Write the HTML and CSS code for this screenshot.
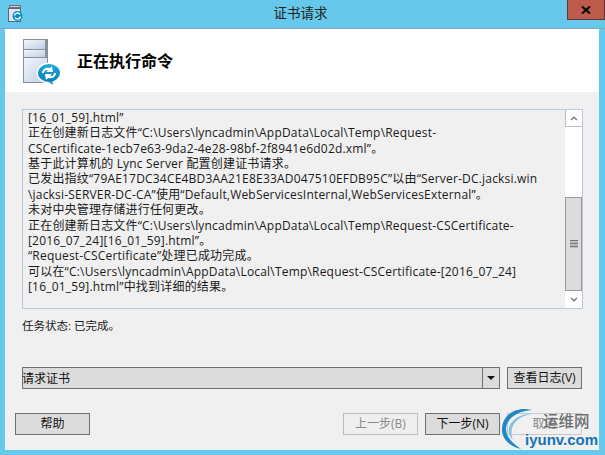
FILE: index.html
```html
<!DOCTYPE html>
<html lang="zh-CN">
<head>
<meta charset="utf-8">
<title>证书请求</title>
<link rel="stylesheet" href="styles.css">
</head>
<body>
<div class="window">
  <div class="titlebar">
    <svg class="title-icon" width="16" height="18" viewBox="0 0 16 18">
      <rect x="1.500" y="0.500" width="11" height="2" fill="#c9ccd2" stroke="#6d7278"/>
      <rect x="0.500" y="3.500" width="12" height="13" fill="#dfe6f2" stroke="#5f6570"/>
      <circle cx="9.500" cy="11" r="5" fill="#0d8fc4"/>
      <path d="M6.500 10.500a3 3 0 0 1 5.500-1M12.500 11.500a3 3 0 0 1-5.500 1" fill="none" stroke="#fff" stroke-width="1.400"/>
    </svg>
    <span class="title-text">证书请求</span>
    <div class="close">
      <svg width="10" height="8" viewBox="0 0 10 8"><path d="M1 0.500 9 7.500M9 0.500 1 7.500" stroke="#0a0a0a" stroke-width="2.200"/></svg>
    </div>
  </div>
  <div class="client">
    <header class="header">
      <svg class="server-icon" width="42" height="48" viewBox="0 0 42 48">
        <defs>
          <linearGradient id="srv" x1="0" y1="0" x2="1" y2="1">
            <stop offset="0" stop-color="#f4f6fb"/>
            <stop offset="1" stop-color="#bdcfe6"/>
          </linearGradient>
          <linearGradient id="blue" x1="0" y1="0" x2="0" y2="1">
            <stop offset="0" stop-color="#19a9dc"/>
            <stop offset="1" stop-color="#0a7fb6"/>
          </linearGradient>
        </defs>
        <rect x="1" y="1" width="25" height="44" fill="#8a8f98"/>
        <rect x="2" y="2" width="21" height="9" fill="url(#srv)"/>
        <rect x="2" y="12" width="21" height="7" fill="url(#srv)"/>
        <rect x="2" y="20" width="23" height="24" fill="url(#srv)"/>
        <ellipse cx="27" cy="35" rx="12.500" ry="10.500" fill="#fff"/>
        <ellipse cx="27" cy="35" rx="11" ry="9" fill="url(#blue)"/>
        <path d="M20 35c0-4 4-6 8-5l2-2 1 6-7 0 2-2c-2-.5-4 .5-4 3zM34 35c0 4-4 6-8 5l-2 2-1-6 7 0-2 2c2 .5 4-.5 4-3z" fill="#fff"/>
        <path d="M27 44l4 3-1-4z" fill="#0a7fb6"/>
      </svg>
      <h1 class="heading">正在执行命令</h1>
    </header>
    <main class="body">
      <div class="logbox">
        <div class="logtext">
          <div>[16_01_59].html”</div>
          <div>正在创建新日志文件“C:\Users\lyncadmin\AppData\Local\Temp\Request-</div>
          <div>CSCertificate-1ecb7e63-9da2-4e28-98bf-2f8941e6d02d.xml”。</div>
          <div>基于此计算机的 Lync Server 配置创建证书请求。</div>
          <div>已发出指纹“79AE17DC34CE4BD3AA21E8E33AD047510EFDB95C”以由“Server-DC.jacksi.win</div>
          <div>\jacksi-SERVER-DC-CA”使用“Default,WebServicesInternal,WebServicesExternal”。</div>
          <div>未对中央管理存储进行任何更改。</div>
          <div>正在创建新日志文件“C:\Users\lyncadmin\AppData\Local\Temp\Request-CSCertificate-</div>
          <div>[2016_07_24][16_01_59].html”。</div>
          <div>“Request-CSCertificate”处理已成功完成。</div>
          <div>可以在“C:\Users\lyncadmin\AppData\Local\Temp\Request-CSCertificate-[2016_07_24]</div>
          <div>[16_01_59].html”中找到详细的结果。</div>
        </div>
        <div class="scrollbar">
          <div class="sb-btn"><svg width="8" height="5" viewBox="0 0 8 5"><path d="M1 4 4 1.200 7 4" fill="none" stroke="#777" stroke-width="1.300"/></svg></div>
          <div class="sb-track"></div>
          <div class="sb-thumb"><span class="grip"></span></div>
          <div class="sb-btn"><svg width="8" height="5" viewBox="0 0 8 5"><path d="M1 1 4 3.800 7 1" fill="none" stroke="#777" stroke-width="1.300"/></svg></div>
        </div>
      </div>
      <p class="status">任务状态: 已完成。</p>
      <div class="action-row">
        <div class="combo">
          <span class="combo-value">请求证书</span>
          <span class="combo-arrow"></span>
        </div>
        <button class="btn">查看日志(V)</button>
      </div>
      <div class="footer">
        <button class="btn">帮助</button>
        <div class="nav">
          <button class="btn disabled">上一步(B)</button>
          <button class="btn">下一步(N)</button>
          <button class="btn cancel">取消</button>
        </div>
      </div>
    </main>
  </div>
  <div class="watermark">
    <svg class="wm-ring" width="36" height="42" viewBox="0 0 36 42">
      <path d="M31 2C16 -2 2 6 1 20c-.500 11 7 18 19 21C11 35 5 29 5 20 6 10 17 3 31 2z" fill="#2088c4"/>
      <path d="M31 6C21 5 10 11 8 20c-1 5 1 9 4 12-2-4-2-8-1-12 2-7 10-13 20-14z" fill="#7fc0e4"/>
    </svg>
    <span class="wm-cn">运维网</span>
    <span class="wm-en">iyunv.com</span>
  </div>
</div>
</body>
</html>
```
FILE: styles.css
```css
* { box-sizing: border-box; }
html, body { margin: 0; padding: 0; }
body {
  width: 605px;
  height: 455px;
  overflow: hidden;
  font-family: "Open Sans", "Noto Sans CJK SC", sans-serif;
  font-size: 12px;
  color: #1a1a1a;
}
.window {
  position: relative;
  width: 605px;
  height: 455px;
  background: #66c8ea;
  display: flex;
  flex-direction: column;
}
.titlebar {
  position: relative;
  height: 29px;
  flex: none;
  display: flex;
  align-items: center;
  justify-content: center;
  border-bottom: 1px solid #7fa9c4;
}
.title-icon { position: absolute; left: 8px; top: 5px; }
.title-text {
  font-family: "Noto Sans CJK SC", sans-serif;
  font-size: 13.500px;
  color: #222;
  margin: -4px 4px 0 0;
}
.close {
  position: absolute;
  right: 0;
  top: 0;
  width: 38px;
  height: 20px;
  background: #bf5b4d;
  border: 1px solid #5a3a38;
  border-top: 0;
  display: flex;
  align-items: center;
  justify-content: center;
}
.client {
  flex: 1;
  margin: 0 6px 5px 5px;
  background: #f0f0f0;
  display: flex;
  flex-direction: column;
}
.header {
  height: 63px;
  flex: none;
  background: #fff;
  display: flex;
  align-items: center;
  padding-left: 17px;
}
.server-icon { flex: none; margin-top: 3px; }
.heading {
  margin: 0 0 0 13px;
  font-family: "Noto Sans CJK SC", sans-serif;
  font-size: 16px;
  font-weight: 700;
  color: #000;
  position: relative;
  top: -1px;
}
.body {
  flex: 1;
  padding: 17px 17px 0 17px;
  display: flex;
  flex-direction: column;
}
.logbox {
  height: 200px;
  flex: none;
  border: 1px solid #b3cbe2;
  display: flex;
  margin-right: -1px;
}
.logtext {
  flex: 1;
  padding: 0 0 0 5px;
  white-space: nowrap;
  overflow: hidden;
  font-size: 12px;
  letter-spacing: 0.190px;
}
.logtext div {
  height: 15.360px;
  line-height: 15.360px;
}
.scrollbar {
  width: 17px;
  flex: none;
  display: flex;
  flex-direction: column;
  background: #fff;
}
.sb-btn {
  height: 17px;
  flex: none;
  background: #fff;
  border: 1px solid #bdbdbd;
  border-width: 0 0 1px 1px;
  display: flex;
  align-items: center;
  justify-content: center;
}
.sb-btn:last-child { border-width: 0; }
.sb-track { flex: 1; }
.sb-thumb {
  height: 94px;
  flex: none;
  background: #dcdcdc;
  border: 1px solid #9a9a9a;
  display: flex;
  align-items: center;
  justify-content: center;
}
.grip {
  width: 8px;
  height: 8px;
  background: repeating-linear-gradient(#777 0 1px, #bbb 1px 3px);
}
.status {
  margin: 8px 0 0 0;
  height: 18px;
  line-height: 18px;
  font-size: 11.500px;
}
.action-row {
  margin-top: 32px;
  display: flex;
  gap: 7px;
}
.combo {
  width: 478px;
  height: 22px;
  background: #dcdcdc;
  border: 1px solid #707070;
  display: flex;
  align-items: center;
  justify-content: space-between;
  line-height: 18px;
}
.combo-value { color: #111; margin-left: -1px; position: relative; top: 1px; }
.combo-arrow {
  width: 17px;
  height: 100%;
  border-left: 1px solid #707070;
  position: relative;
}
.combo-arrow::after {
  content: "";
  position: absolute;
  left: 4px;
  top: 8px;
  border-style: solid;
  border-width: 4px 4px 0 4px;
  border-color: #111 transparent transparent transparent;
}
.btn {
  width: 75px;
  height: 22px;
  padding: 0;
  background: #dcdcdc;
  border: 1px solid #707070;
  border-radius: 0;
  font-family: "Open Sans", "Noto Sans CJK SC", sans-serif;
  font-size: 12px;
  line-height: 18px;
  color: #111;
}
.btn.disabled {
  background: #efefef;
  border-color: #bcbcbc;
  color: #8a8a8a;
}
.btn.cancel {
  background: #f0f0f0;
  border-color: #c8c8c8;
  color: #888;
}
.footer {
  margin-top: 24px;
  margin-left: -7px;
  display: flex;
  justify-content: space-between;
}
.nav {
  display: flex;
  gap: 7px;
}
.watermark {
  position: absolute;
  left: 501px;
  top: 408px;
  width: 104px;
  height: 47px;
}
.wm-ring { position: absolute; left: 0; top: 0; }
.wm-cn {
  position: absolute;
  left: 42px;
  top: 2px;
  font-family: "Noto Sans CJK SC", sans-serif;
  font-size: 15.500px;
  font-weight: 500;
  color: #6d6f72;
  line-height: 20px;
  white-space: nowrap;
}
.wm-en {
  position: absolute;
  left: 24px;
  top: 23px;
  font-family: "Liberation Sans", sans-serif;
  font-size: 15px;
  font-weight: 700;
  color: #1573b5;
  line-height: 18px;
  white-space: nowrap;
}
```
